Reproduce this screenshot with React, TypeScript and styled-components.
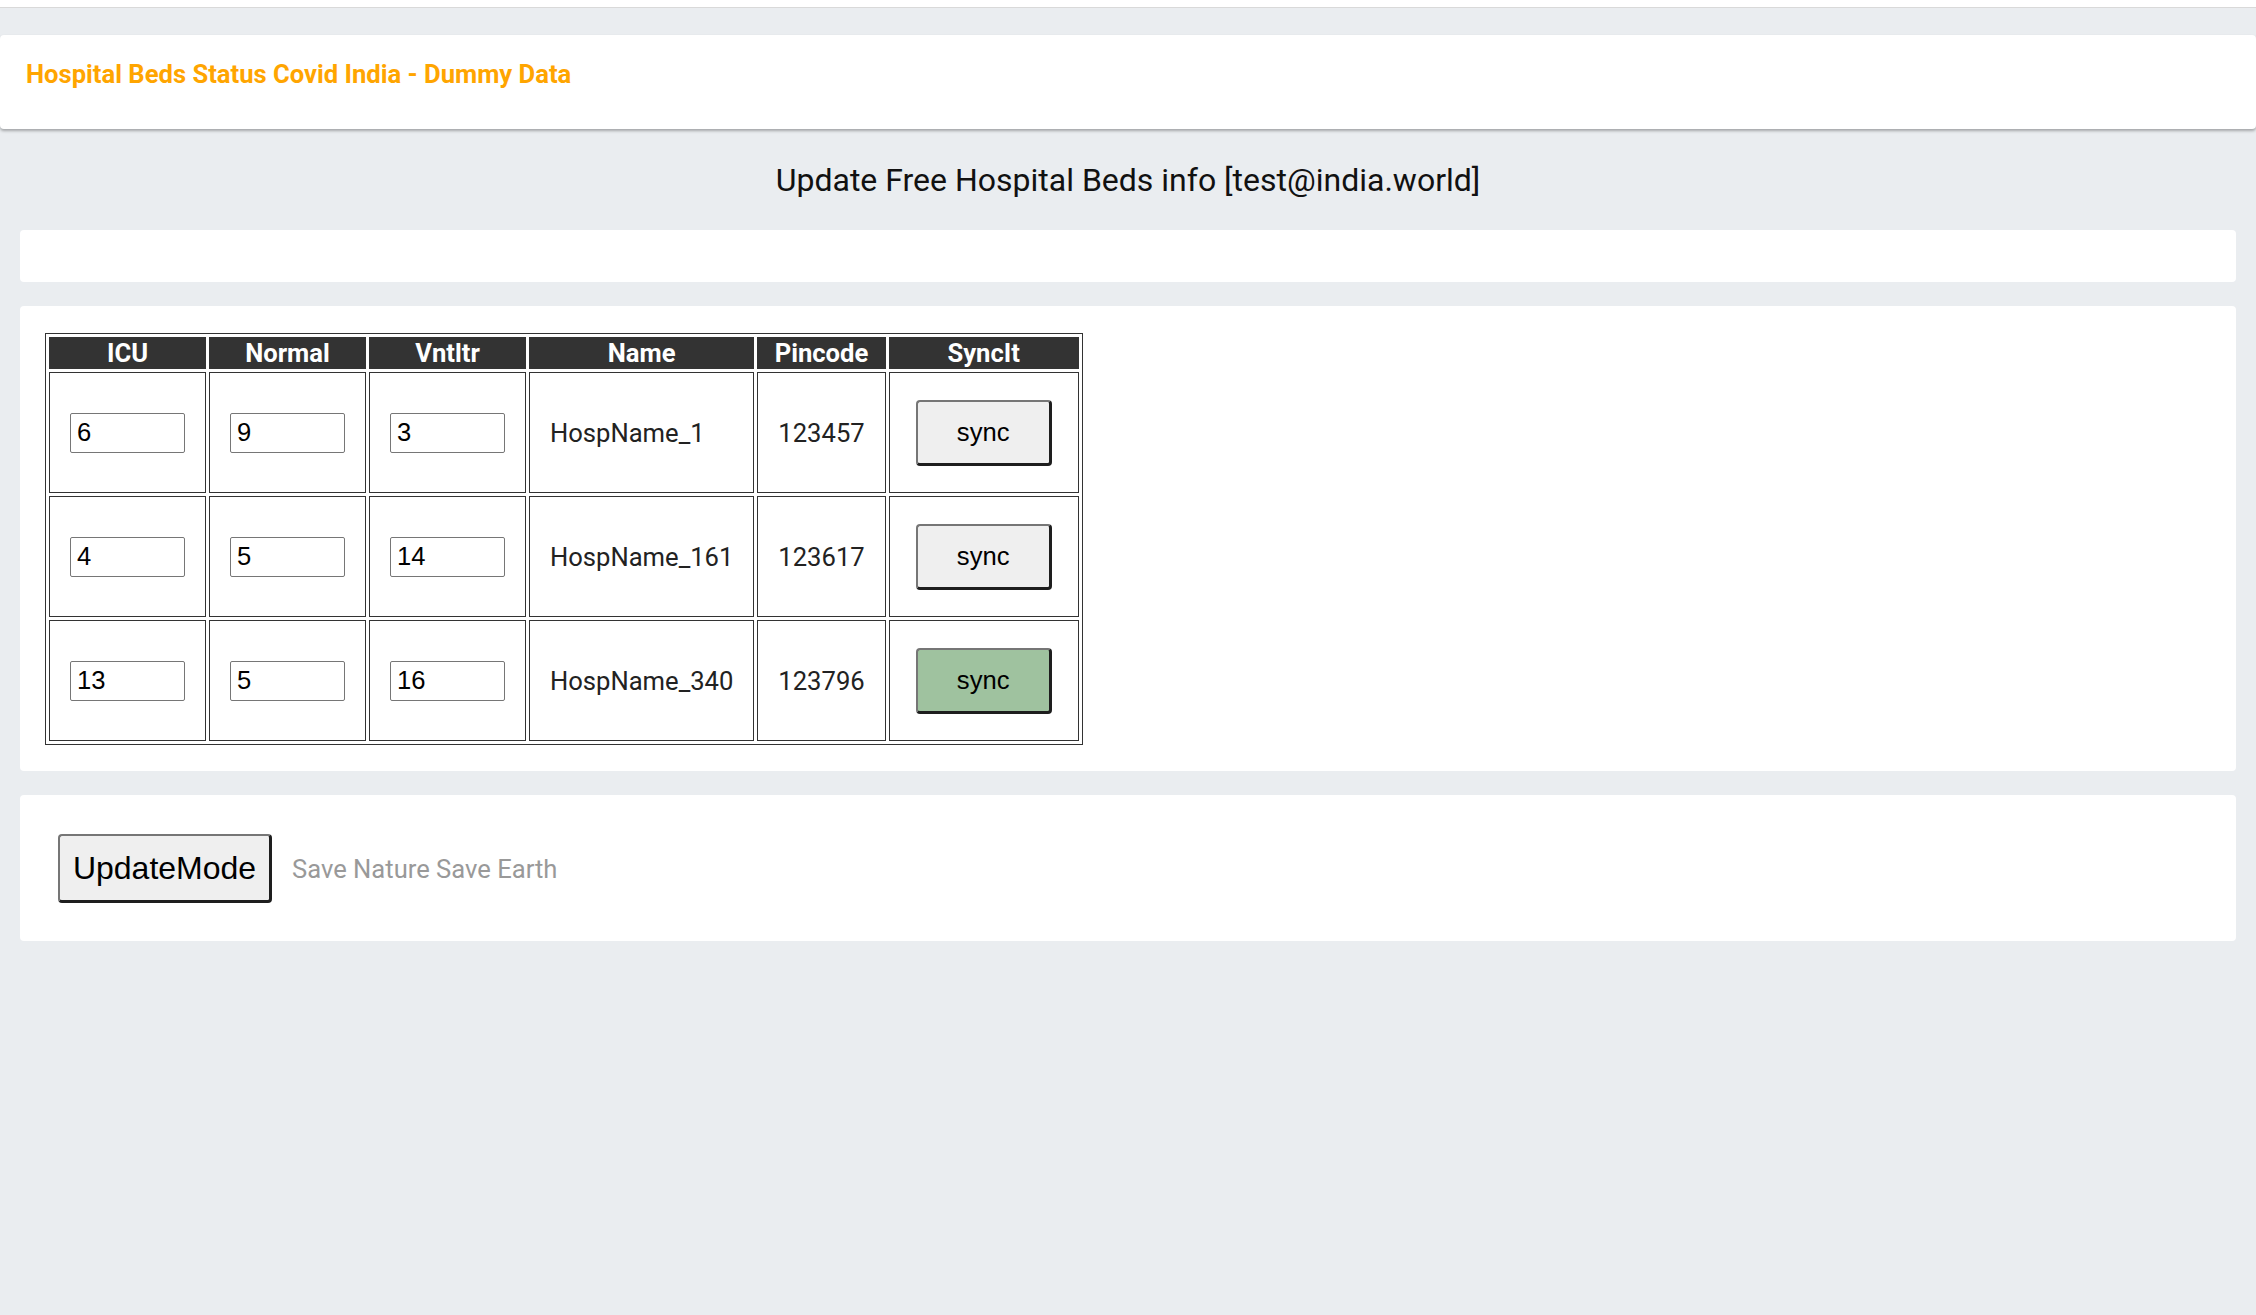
import React from "react";
import styled, { createGlobalStyle } from "styled-components";

const GlobalStyle = createGlobalStyle`
  html, body {
    margin: 0;
    padding: 0;
    background: #eaedf0;
    font-family: Roboto, "Liberation Sans", Arial, sans-serif;
    color: #111;
  }
`;

const rows = [
  { icu: "6", normal: "9", vntltr: "3", name: "HospName_1", pincode: "123457", active: false },
  { icu: "4", normal: "5", vntltr: "14", name: "HospName_161", pincode: "123617", active: false },
  { icu: "13", normal: "5", vntltr: "16", name: "HospName_340", pincode: "123796", active: true },
];

export default function App() {
  return (
    <Page>
      <GlobalStyle />
      <TopStrip />
      <Header>
        <Brand>Hospital Beds Status Covid India - Dummy Data</Brand>
      </Header>
      <Title>Update Free Hospital Beds info [test@india.world]</Title>
      <Card $height="52px" />
      <Card $padding="27px 25px 26px">
        <BedsTable>
          <thead>
            <tr>
              <Th>ICU</Th>
              <Th>Normal</Th>
              <Th>Vntltr</Th>
              <Th>Name</Th>
              <Th>Pincode</Th>
              <Th>SyncIt</Th>
            </tr>
          </thead>
          <tbody>
            {rows.map((r) => (
              <tr key={r.name}>
                <Td>
                  <NumInput defaultValue={r.icu} />
                </Td>
                <Td>
                  <NumInput defaultValue={r.normal} />
                </Td>
                <Td>
                  <NumInput defaultValue={r.vntltr} />
                </Td>
                <Td>{r.name}</Td>
                <Td>{r.pincode}</Td>
                <Td>
                  <SyncButton $active={r.active}>sync</SyncButton>
                </Td>
              </tr>
            ))}
          </tbody>
        </BedsTable>
      </Card>
      <Card $padding="39px 38px 38px">
        <Footer>
          <ModeButton>UpdateMode</ModeButton>
          <Motto>Save Nature Save Earth</Motto>
        </Footer>
      </Card>
    </Page>
  );
}

const Page = styled.div`
  min-height: 1315px;
  display: flex;
  flex-direction: column;
`;

const TopStrip = styled.div`
  height: 7px;
  background: #fff;
  border-bottom: 1px solid #d9d9d9;
`;

const Header = styled.header`
  margin-top: 27px;
  height: 94px;
  box-sizing: border-box;
  padding: 24px 26px 0;
  background: #fff;
  border-radius: 4px;
  box-shadow: 0 2px 3px rgba(0, 0, 0, 0.3);
`;

const Brand = styled.div`
  color: #ffa500;
  font-size: 25.6px;
  font-weight: 700;
`;

const Title = styled.h2`
  margin: 32px 0 31px;
  text-align: center;
  font-size: 32px;
  font-weight: 400;
  color: #111;
`;

const Card = styled.section<{ $height?: string; $padding?: string }>`
  margin: 0 20px 24px;
  background: #fff;
  border-radius: 4px;
  box-sizing: border-box;
  height: ${(p) => p.$height || "auto"};
  padding: ${(p) => p.$padding || "0"};
`;

const BedsTable = styled.table`
  border: 1px solid #333;
  border-spacing: 3px;
  font-size: 25.6px;
  color: #222;
`;

const Th = styled.th`
  background: #333;
  color: #fff;
  border: 1px solid #333;
  padding: 0;
  font-size: 25.6px;
  font-weight: 700;
  line-height: 30px;
`;

const Td = styled.td`
  border: 1px solid #333;
  padding: 20px;
  vertical-align: middle;
  text-align: left;
`;

const NumInput = styled.input`
  display: block;
  box-sizing: border-box;
  width: 115px;
  height: 40px;
  padding: 0 6px;
  border: 1px solid #767676;
  border-radius: 2px;
  font-family: "Liberation Sans", Arial, sans-serif;
  font-size: 25.6px;
  color: #000;
  background: #fff;
`;

const SyncButton = styled.button<{ $active?: boolean }>`
  display: block;
  width: 136px;
  height: 66px;
  margin: 7px 6px 6px;
  box-sizing: border-box;
  border: 2px solid;
  border-width: 2px 3px 3px 2px;
  border-color: #767676 #1e1e1e #1e1e1e #767676;
  border-radius: 4px;
  background: ${(p) => (p.$active ? "#9fc29f" : "#efefef")};
  font-family: "Liberation Sans", Arial, sans-serif;
  font-size: 25.6px;
  color: #000;
`;

const Footer = styled.div`
  display: flex;
  align-items: center;
  gap: 20px;
`;

const ModeButton = styled.button`
  box-sizing: border-box;
  width: 214px;
  height: 69px;
  border: 2px solid;
  border-width: 2px 3px 3px 2px;
  border-color: #767676 #1e1e1e #1e1e1e #767676;
  border-radius: 4px;
  background: #efefef;
  font-family: "Liberation Sans", Arial, sans-serif;
  font-size: 32px;
  color: #000;
  padding: 0;
`;

const Motto = styled.span`
  color: #999;
  font-size: 25.6px;
`;
